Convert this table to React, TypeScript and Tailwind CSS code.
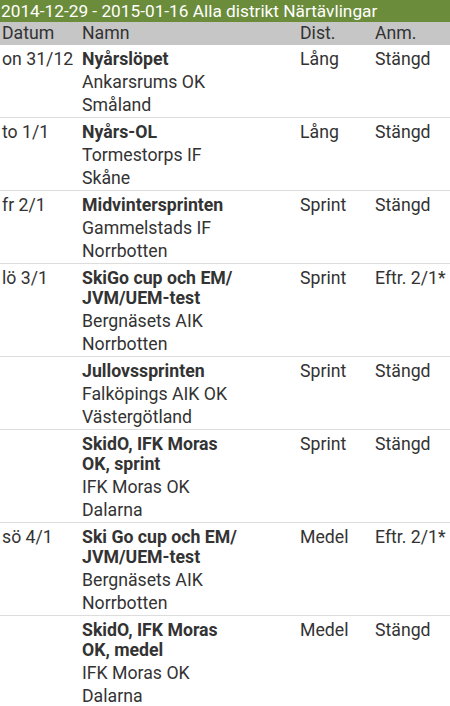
type Row = {
  date: string
  title: React.ReactNode
  club: string
  district: string
  dist: string
  note: string
}

const data: Row[] = [
  { date: 'on 31/12', title: 'Nyårslöpet', club: 'Ankarsrums OK', district: 'Småland', dist: 'Lång', note: 'Stängd' },
  { date: 'to 1/1', title: 'Nyårs-OL', club: 'Tormestorps IF', district: 'Skåne', dist: 'Lång', note: 'Stängd' },
  { date: 'fr 2/1', title: 'Midvintersprinten', club: 'Gammelstads IF', district: 'Norrbotten', dist: 'Sprint', note: 'Stängd' },
  {
    date: 'lö 3/1',
    title: <>SkiGo cup och EM/<wbr />JVM/UEM-test</>,
    club: 'Bergnäsets AIK',
    district: 'Norrbotten',
    dist: 'Sprint',
    note: 'Eftr. 2/1*',
  },
  { date: '', title: 'Jullovssprinten', club: 'Falköpings AIK OK', district: 'Västergötland', dist: 'Sprint', note: 'Stängd' },
  { date: '', title: 'SkidO, IFK Moras OK, sprint', club: 'IFK Moras OK', district: 'Dalarna', dist: 'Sprint', note: 'Stängd' },
  {
    date: 'sö 4/1',
    title: <>Ski Go cup och EM/<wbr />JVM/UEM-test</>,
    club: 'Bergnäsets AIK',
    district: 'Norrbotten',
    dist: 'Medel',
    note: 'Eftr. 2/1*',
  },
  { date: '', title: 'SkidO, IFK Moras OK, medel', club: 'IFK Moras OK', district: 'Dalarna', dist: 'Medel', note: 'Stängd' },
]

const cols = 'grid grid-cols-[80px_220px_75px_1fr]'

export default function App() {
  return (
    <div className="w-[450px] h-[706px] overflow-hidden bg-white text-[#333333] font-['Roboto',sans-serif]">
      <div className="h-[22px] bg-[#6b8c3a] text-white text-[17.25px] leading-[22px] pl-[1px] whitespace-nowrap">
        2014-12-29 - 2015-01-16 Alla distrikt Närtävlingar
      </div>
      <div className={`${cols} h-[23px] bg-[#c6c6c6] text-[17.7px] leading-[23px] text-[#333333]`}>
        <div className="pl-[2px]">Datum</div>
        <div className="pl-[2px]">Namn</div>
        <div>Dist.</div>
        <div>Anm.</div>
      </div>
      {data.map((r, i) => (
        <div key={i} className={`${cols} border-b border-[#dddddd] pt-[4px] pb-[2px] text-[17.7px]`}>
          <div className="pl-[2px] leading-[20px]">{r.date}</div>
          <div className="pl-[2px] pr-[63px]">
            <div className="font-bold leading-[20px]">{r.title}</div>
            <div className="leading-[20px] mt-[3px]">{r.club}</div>
            <div className="leading-[20px] mt-[3px]">{r.district}</div>
          </div>
          <div className="leading-[20px]">{r.dist}</div>
          <div className="leading-[20px] whitespace-nowrap">{r.note}</div>
        </div>
      ))}
    </div>
  )
}
